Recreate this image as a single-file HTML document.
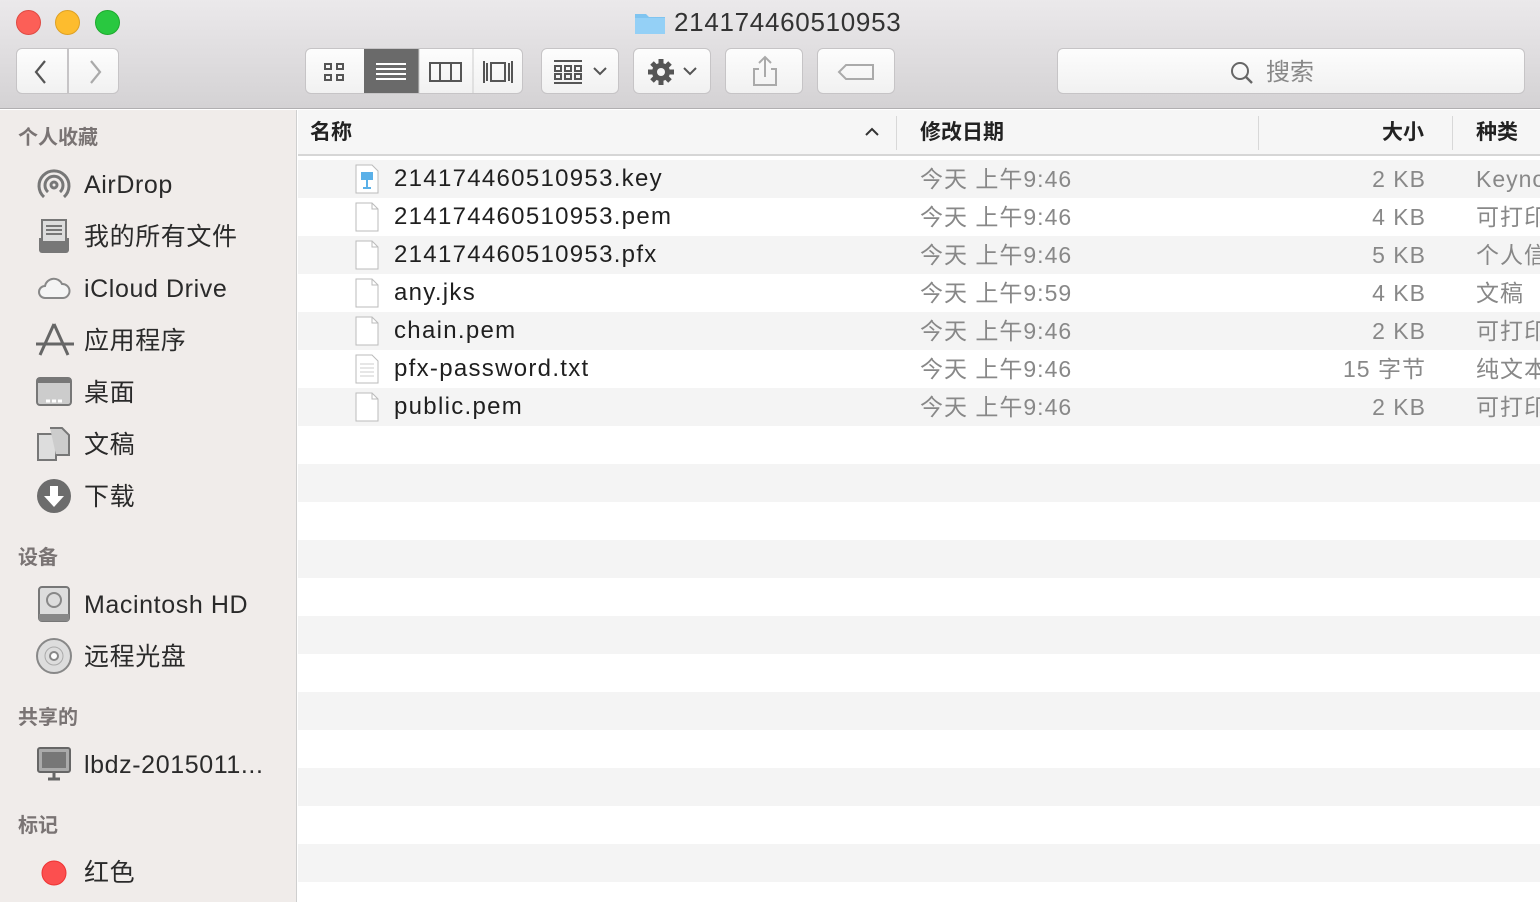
<!DOCTYPE html>
<html><head><meta charset="utf-8"><style>
*{margin:0;padding:0;box-sizing:border-box}
body{width:1540px;height:902px;overflow:hidden;font-family:"Liberation Sans","Noto Sans CJK SC",sans-serif;background:#fff;position:relative;color:#222}
.top{position:absolute;left:0;top:0;width:1540px;height:109px;background:linear-gradient(#ebe9eb,#d4d2d4);border-bottom:1px solid #b1afb1}
.dot{position:absolute;top:10px;width:25px;height:25px;border-radius:50%}
.title{position:absolute;top:7px;left:674px;font-size:26px;line-height:30px;color:#333;letter-spacing:0.7px}
.btn{position:absolute;top:48px;height:46px;background:linear-gradient(#fdfdfd,#f1f1f1);border:1px solid #c6c4c6;border-radius:6px}
.side{position:absolute;left:0;top:110px;width:297px;height:792px;background:#f0ecea;border-right:1px solid #cfcfcf}
.sh{position:absolute;left:18px;font-size:20px;line-height:24px;font-weight:bold;color:#7a7474}
.si{position:absolute;left:84px;font-size:25px;line-height:30px;color:#2a2a2a;letter-spacing:0.6px}
.ic{position:absolute;left:36px}
.hdr{position:absolute;left:298px;top:110px;width:1242px;height:46px;background:#f6f6f6;border-bottom:2px solid #d6d6d6;font-size:21px;line-height:24px;font-weight:bold;color:#222}
.hdr span{position:absolute;top:11px}
.sep{position:absolute;top:6px;width:1px;height:34px;background:#d8d8d8}
.row{position:absolute;left:298px;width:1242px;height:38px;font-size:23px;line-height:28px}
.row span{position:absolute;top:5px;white-space:nowrap}
.n{left:96px;color:#1f1f1f;font-size:24px;letter-spacing:1.3px}.d{left:622px;color:#888;letter-spacing:1px}.s{right:114px;color:#888;letter-spacing:1px}.k{left:1178px;color:#888;letter-spacing:1px}
.fi{position:absolute;left:57px;top:4px}
</style></head><body>
<div class="top">
<div class="dot" style="left:16px;background:#fc5f57;border:1px solid #df4a43"></div>
<div class="dot" style="left:55px;background:#fdbc2e;border:1px solid #dea124"></div>
<div class="dot" style="left:95px;background:#29c840;border:1px solid #1eaa2e"></div>
<svg style="position:absolute;left:634px;top:11px" width="32" height="24"><path d="M1 3h11l3 3h16v17H1z" fill="#7fc4f0"/><path d="M1 7h30v16H1z" fill="#94d0f6"/></svg>
<div class="title">214174460510953</div>
<div class="btn" style="left:16px;width:52px;border-radius:6px 0 0 6px"><svg width="52" height="46"><path d="M28 12l-9 11 9 11" stroke="#555" stroke-width="2.2" fill="none"/></svg></div>
<div class="btn" style="left:68px;width:51px;border-radius:0 6px 6px 0"><svg width="52" height="46"><path d="M22 12l9 11-9 11" stroke="#aaa" stroke-width="2.2" fill="none"/></svg></div>
<div class="btn" style="left:305px;width:218px;overflow:hidden">
<svg width="218" height="46">
<g fill="none" stroke="#555" stroke-width="2"><rect x="19" y="15" width="6" height="5"/><rect x="31" y="15" width="6" height="5"/><rect x="19" y="26" width="6" height="5"/><rect x="31" y="26" width="6" height="5"/></g>
<rect x="58" y="0" width="55" height="46" fill="#6a6a6a"/>
<g stroke="#fff" stroke-width="2"><path d="M70 15h30M70 20h30M70 25h30M70 30h30"/></g>
<path d="M113 0v46M167 0v46" stroke="#ccc"/>
<g fill="none" stroke="#555" stroke-width="2"><rect x="124" y="14" width="31" height="18"/><path d="M134 14v18M145 14v18"/><rect x="185" y="14" width="14" height="18"/><path d="M178 12v22M181 14v18M203 14v18M206 12v22"/></g>
</svg></div>
<div class="btn" style="left:541px;width:78px"><svg width="78" height="46"><g fill="none" stroke="#555" stroke-width="2"><path d="M12 12h28M12 34h28"/><rect x="13" y="17" width="6" height="5"/><rect x="23" y="17" width="6" height="5"/><rect x="33" y="17" width="6" height="5"/><rect x="13" y="25" width="6" height="5"/><rect x="23" y="25" width="6" height="5"/><rect x="33" y="25" width="6" height="5"/><path d="M52 19l6 6 6-6"/></g></svg></div>
<div class="btn" style="left:633px;width:78px"><svg width="78" height="46"><g transform="translate(27 23)"><circle r="9" fill="#555"/><g stroke="#555" stroke-width="5"><path d="M0-13V13M-13 0H13M-9-9L9 9M9-9L-9 9"/></g><circle r="4" fill="#f5f5f5"/></g><path d="M50 19l6 6 6-6" stroke="#555" stroke-width="2" fill="none"/></svg></div>
<div class="btn" style="left:725px;width:78px"><svg width="78" height="46"><g fill="none" stroke="#aaa" stroke-width="2"><path d="M33 20h-5v16h22V20h-5M39 8v20M33 14l6-6 6 6"/></g></svg></div>
<div class="btn" style="left:817px;width:78px"><svg width="78" height="46"><path d="M28 16h27v14H28l-7-7z" fill="none" stroke="#aaa" stroke-width="2"/></svg></div>
<div class="btn" style="left:1057px;width:468px"><svg style="position:absolute;left:172px;top:12px" width="24" height="24"><circle cx="10" cy="10" r="8" fill="none" stroke="#666" stroke-width="2"/><path d="M16 16l6 6" stroke="#666" stroke-width="2.4"/></svg><span style="position:absolute;left:208px;top:10px;font-size:24px;line-height:28px;color:#888">搜索</span></div>
</div>
<div class="side">
<div class="sh" style="top:16px">个人收藏</div>
<svg class="ic" style="top:57px" width="36" height="36"><g fill="none" stroke="#777" stroke-width="3"><path d="M8 30A15 15 0 1 1 28 30"/><path d="M12 25A9 9 0 1 1 24 25"/><circle cx="18" cy="18" r="3"/></g></svg>
<div class="si" style="top:60px">AirDrop</div>
<svg class="ic" style="top:108px" width="36" height="36"><path d="M3 20h30v12a3 3 0 0 1-3 3H6a3 3 0 0 1-3-3z" fill="#777"/><rect x="6" y="2" width="24" height="22" fill="#ddd" stroke="#777" stroke-width="2"/><path d="M10 8h16M10 12h16M10 16h16" stroke="#777" stroke-width="2"/></svg>
<div class="si" style="top:112px">我的所有文件</div>
<svg class="ic" style="top:163px" width="36" height="30"><path d="M9 25a6 6 0 0 1 0-12a9 9 0 0 1 17-2a7 7 0 0 1 1 14z" fill="#f4f4f4" stroke="#888" stroke-width="2"/></svg>
<div class="si" style="top:164px">iCloud Drive</div>
<svg class="ic" style="top:212px" width="38" height="36"><g stroke="#666" stroke-width="3" fill="none"><path d="M18 2L4 33M18 2l14 31M0 22h38"/></g></svg>
<div class="si" style="top:216px">应用程序</div>
<svg class="ic" style="top:267px" width="36" height="30"><rect x="1" y="1" width="34" height="27" rx="3" fill="#ccc" stroke="#777" stroke-width="2"/><rect x="1" y="1" width="34" height="5" fill="#777"/><path d="M10 24h4M16 24h4M22 24h4" stroke="#fff" stroke-width="3"/></svg>
<div class="si" style="top:268px">桌面</div>
<svg class="ic" style="top:316px" width="36" height="36"><path d="M2 8h14l4 4v22H2z" fill="#ddd" stroke="#777" stroke-width="2"/><path d="M14 2h12l7 7v20H20" fill="#ccc" stroke="#777" stroke-width="2"/></svg>
<div class="si" style="top:320px">文稿</div>
<svg class="ic" style="top:368px" width="36" height="36"><circle cx="18" cy="18" r="17" fill="#6c6c6c"/><path d="M14 8h8v10h6L18 29 8 18h6z" fill="#fff"/></svg>
<div class="si" style="top:372px">下载</div>
<div class="sh" style="top:436px">设备</div>
<svg class="ic" style="top:476px" width="36" height="36"><rect x="3" y="1" width="30" height="34" rx="3" fill="#ddd" stroke="#777" stroke-width="2"/><circle cx="18" cy="14" r="7" fill="none" stroke="#888" stroke-width="2"/><rect x="3" y="28" width="30" height="7" fill="#888"/></svg>
<div class="si" style="top:480px">Macintosh HD</div>
<svg class="ic" style="top:528px" width="36" height="36"><circle cx="18" cy="18" r="17" fill="#ddd" stroke="#888" stroke-width="2"/><circle cx="18" cy="18" r="9" fill="none" stroke="#aaa"/><circle cx="18" cy="18" r="4" fill="#fff" stroke="#888" stroke-width="2"/></svg>
<div class="si" style="top:532px">远程光盘</div>
<div class="sh" style="top:596px">共享的</div>
<svg class="ic" style="top:636px" width="36" height="36"><rect x="2" y="2" width="32" height="24" rx="2" fill="#aaa" stroke="#666" stroke-width="2"/><rect x="6" y="6" width="24" height="16" fill="#777"/><path d="M12 33h12M18 26v7" stroke="#666" stroke-width="3"/></svg>
<div class="si" style="top:640px">lbdz-2015011...</div>
<div class="sh" style="top:704px">标记</div>
<svg class="ic" style="top:749px;left:40px" width="28" height="28"><circle cx="14" cy="14" r="12" fill="#fc4f4f" stroke="#e33" stroke-width="1"/></svg>
<div class="si" style="top:748px">红色</div>
</div>
<div class="hdr"><span style="left:12px">名称</span><svg style="position:absolute;left:566px;top:16px" width="16" height="12"><path d="M2 9l6-6 6 6" stroke="#333" stroke-width="2" fill="none"/></svg>
<div class="sep" style="left:598px"></div><span style="left:622px">修改日期</span>
<div class="sep" style="left:960px"></div><span style="left:1084px">大小</span>
<div class="sep" style="left:1154px"></div><span style="left:1178px">种类</span></div>
<div style="position:absolute;left:298px;top:160px;width:1242px;height:742px;background:repeating-linear-gradient(to bottom,#f4f4f4 0px,#f4f4f4 38px,#fff 38px,#fff 76px)"></div>
<div class="row" style="top:160px"><svg class="fi" width="24" height="30"><path d="M1 1h16l6 6v22H1z" fill="#fff" stroke="#bbb"/><rect x="6" y="8" width="12" height="8" fill="#5ab0e8"/><path d="M12 16v8M8 24h8" stroke="#5ab0e8" stroke-width="2"/></svg><span class="n">214174460510953.key</span><span class="d">今天 上午9:46</span><span class="s">2 KB</span><span class="k">Keynote</span></div>
<div class="row" style="top:198px"><svg class="fi" width="24" height="30"><path d="M1 1h16l6 6v22H1z" fill="#fff" stroke="#bbb"/><path d="M17 1v6h6" fill="none" stroke="#bbb"/></svg><span class="n">214174460510953.pem</span><span class="d">今天 上午9:46</span><span class="s">4 KB</span><span class="k">可打印</span></div>
<div class="row" style="top:236px"><svg class="fi" width="24" height="30"><path d="M1 1h16l6 6v22H1z" fill="#fff" stroke="#bbb"/><path d="M17 1v6h6" fill="none" stroke="#bbb"/></svg><span class="n">214174460510953.pfx</span><span class="d">今天 上午9:46</span><span class="s">5 KB</span><span class="k">个人信</span></div>
<div class="row" style="top:274px"><svg class="fi" width="24" height="30"><path d="M1 1h16l6 6v22H1z" fill="#fff" stroke="#bbb"/><path d="M17 1v6h6" fill="none" stroke="#bbb"/></svg><span class="n">any.jks</span><span class="d">今天 上午9:59</span><span class="s">4 KB</span><span class="k">文稿</span></div>
<div class="row" style="top:312px"><svg class="fi" width="24" height="30"><path d="M1 1h16l6 6v22H1z" fill="#fff" stroke="#bbb"/><path d="M17 1v6h6" fill="none" stroke="#bbb"/></svg><span class="n">chain.pem</span><span class="d">今天 上午9:46</span><span class="s">2 KB</span><span class="k">可打印</span></div>
<div class="row" style="top:350px"><svg class="fi" width="24" height="30"><path d="M1 1h16l6 6v22H1z" fill="#fff" stroke="#bbb"/><path d="M5 10h14M5 14h14M5 18h14M5 22h14" stroke="#ccc"/></svg><span class="n">pfx-password.txt</span><span class="d">今天 上午9:46</span><span class="s">15 字节</span><span class="k">纯文本</span></div>
<div class="row" style="top:388px"><svg class="fi" width="24" height="30"><path d="M1 1h16l6 6v22H1z" fill="#fff" stroke="#bbb"/><path d="M17 1v6h6" fill="none" stroke="#bbb"/></svg><span class="n">public.pem</span><span class="d">今天 上午9:46</span><span class="s">2 KB</span><span class="k">可打印</span></div>
</body></html>
